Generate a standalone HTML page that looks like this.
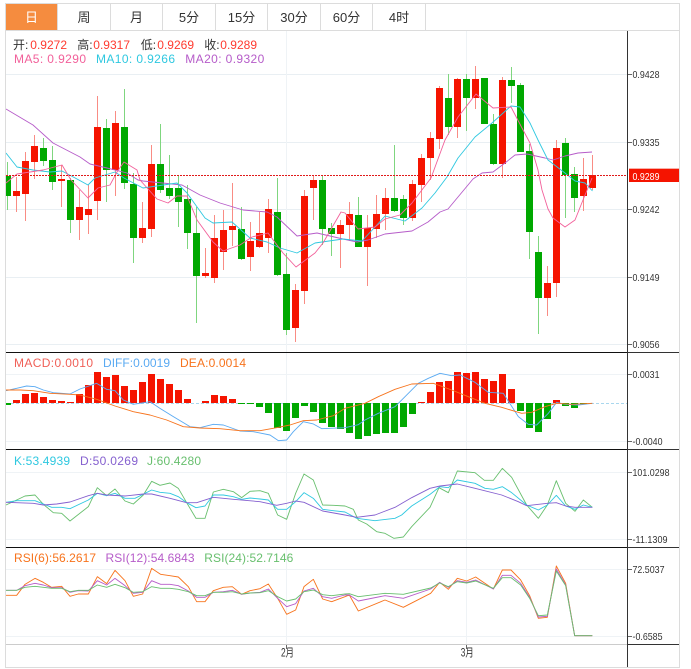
<!DOCTYPE html>
<html><head><meta charset="utf-8"><style>
html,body{margin:0;padding:0;background:#fff}
svg{display:block;font-family:"Liberation Sans","Noto Sans CJK SC",sans-serif}
.ax{font-size:10.5px;fill:#333}
.tab{font-size:13px;fill:#333;text-anchor:middle}
.lg{font-size:12px}
.ln{fill:none;stroke-width:.9;vector-effect:non-scaling-stroke;stroke-linejoin:round}
</style></head><body>
<svg width="691" height="669" viewBox="0 0 691 669" xmlns="http://www.w3.org/2000/svg">
<defs><clipPath id="c"><rect x="6" y="31" width="622" height="613"/></clipPath></defs>

<!-- grid -->
<g shape-rendering="crispEdges" stroke="#e9eff3" stroke-width="1" fill="none">
<path d="M6 74.5H628M6 142.5H628M6 209.5H628M6 277.5H628M6 344.5H628"/>
<path d="M6 374.5H628M6 441.5H628M6 472.5H628M6 539.5H628M6 569.5H628M6 636.5H628" stroke="#eff3f6"/>
<path d="M286.5 31V644M466.5 31V644" stroke="#eff3f6"/>
</g>

<g clip-path="url(#c)">
<!-- candle wicks -->
<g shape-rendering="crispEdges" fill="none" stroke-width="1">
<path stroke="#f98c84" d="M16.5 177V212M25.5 152V221M34.5 135V179M61.5 165V207M79.5 190V240M88.5 185V234M97.5 96V220M115.5 111V196M142.5 202V243M151.5 145V237M205.5 248V278M214.5 215V283M223.5 210V270M232.5 183V246M250.5 222V271M259.5 212V248M268.5 199V253M295.5 284V342M304.5 190V304M313.5 176V220M340.5 220V268M349.5 202V241M367.5 215V286M376.5 195V238M385.5 188V230M412.5 180V221M421.5 154V202M430.5 132V180M439.5 86V149M457.5 78V138M475.5 66V109M502.5 77V178M547.5 266V316M556.5 140V297M583.5 158V211M592.5 155V190"/>
<path stroke="#7fd67f" d="M7.5 162V210M43.5 138V166M52.5 146V190M70.5 178V233M106.5 119V202M124.5 89V189M133.5 173V263M160.5 124V193M169.5 155V199M178.5 176V227M187.5 185V249M196.5 207V323M241.5 207V260M277.5 178V276M286.5 253V335M322.5 176V245M331.5 223V256M358.5 197V247M394.5 145V212M403.5 195V225M448.5 74V135M466.5 74V131M493.5 114V165M511.5 67V103M520.5 83V152M529.5 144V259M538.5 236V334M565.5 138V218M574.5 167V212"/>
</g>
<!-- candle bodies -->
<path shape-rendering="crispEdges" fill="#f51400" d="M13 191h7v5h-7zM22 161h7v33h-7zM31 146h7v16h-7zM58 179h7v2h-7zM76 207h7v13h-7zM85 209h7v6h-7zM94 127h7v74h-7zM112 123h7v47h-7zM139 228h7v10h-7zM148 164h7v65h-7zM202 273h7v3h-7zM211 238h7v40h-7zM220 230h7v22h-7zM229 226h7v4h-7zM247 241h7v16h-7zM256 233h7v14h-7zM265 209h7v29h-7zM292 290h7v38h-7zM301 196h7v95h-7zM310 180h7v8h-7zM337 225h7v9h-7zM346 214h7v11h-7zM364 228h7v19h-7zM373 214h7v15h-7zM382 198h7v16h-7zM409 184h7v34h-7zM418 158h7v27h-7zM427 138h7v20h-7zM436 88h7v51h-7zM454 79h7v48h-7zM472 79h7v19h-7zM499 80h7v84h-7zM544 283h7v15h-7zM553 148h7v135h-7zM580 179h7v17h-7zM589 175h7v13h-7z"/>
<path shape-rendering="crispEdges" fill="#00a800" d="M4 176h7v20h-7zM40 148h7v13h-7zM49 160h7v22h-7zM67 180h7v40h-7zM103 128h7v42h-7zM121 127h7v56h-7zM130 184h7v54h-7zM157 164h7v26h-7zM166 188h7v8h-7zM175 188h7v14h-7zM184 199h7v34h-7zM193 233h7v43h-7zM238 229h7v30h-7zM274 212h7v63h-7zM283 274h7v56h-7zM319 180h7v49h-7zM328 228h7v6h-7zM355 215h7v32h-7zM391 198h7v13h-7zM400 199h7v19h-7zM445 98h7v29h-7zM463 79h7v19h-7zM481 78h7v46h-7zM490 124h7v40h-7zM508 80h7v6h-7zM517 85h7v67h-7zM526 151h7v81h-7zM535 252h7v46h-7zM562 143h7v32h-7zM571 174h7v24h-7z"/>

<!-- MA lines -->
<polyline class="ln" stroke="#b65cc9" points="6,109 33,125 53,143 80,157 90,164 107,168 127,173 138,180 143,181 182,185 200,195 220,203 243,210 267,212 277,217 297,236 317,233 343,239 357,242 368,240 385,234 412,231 428,222 440,212 448,209 458,197 473,179 482,173 493,172 505,163 515,155 527,154 545,158 553,160 565,156 578,153 592,152"/>
<polyline class="ln" stroke="#2fc8e0" points="6,153 17,167 33,170 50,172 62,171 77,179 88,185 95,178 115,172 124,178 143,188 177,183 187,193 205,218 213,223 232,222 250,238 267,242 280,248 297,253 315,243 343,239 362,241 375,227 385,216 405,221 422,208 435,193 447,177 458,158 475,137 492,123 511,106 520,107 530,123 538,140 548,160 565,173 575,181 585,183 592.5,191"/>
<polyline class="ln" stroke="#f2609a" points="6,183 17,174 43,170 62,165 71,180 88,198 98,188 110,185 117,172 124,162 137,170 140,180 157,199 168,203 177,196 187,196 197,220 213,242 223,251 240,245 252,237 268,233 283,253 296,267 315,253 323,243 341,212 345,213 358,229 375,227 385,219 400,215 412,203 431,178 445,140 458,117 476,94 493,108 511,107 522,128 530,143 538,170 542,190 548,209 553,218 565,227 575,220 583,200 592,178"/>
</g>

<!-- price line -->
<path d="M6 175.5H628" stroke="#e01a1a" stroke-width="1" stroke-dasharray="2 1" shape-rendering="crispEdges"/>

<!-- MACD -->
<path d="M6 403.5H628" stroke="#a9d7ee" stroke-width="1" stroke-dasharray="3 2" shape-rendering="crispEdges"/>
<path shape-rendering="crispEdges" fill="#f51400" d="M13 400h7v3h-7zM22 394h7v9h-7zM31 393h7v10h-7zM40 397h7v6h-7zM49 400h7v3h-7zM58 401h7v2h-7zM67 402h7v1h-7zM76 394h7v9h-7zM85 385h7v18h-7zM94 372h7v31h-7zM103 377h7v26h-7zM112 375h7v28h-7zM121 386h7v17h-7zM130 390h7v13h-7zM139 382h7v21h-7zM148 374h7v29h-7zM157 379h7v24h-7zM166 384h7v19h-7zM175 390h7v13h-7zM184 399h7v4h-7zM202 401h7v2h-7zM211 395h7v8h-7zM220 396h7v7h-7zM229 399h7v4h-7zM418 402h7v1h-7zM427 392h7v11h-7zM436 382h7v21h-7zM445 381h7v22h-7zM454 372h7v31h-7zM463 373h7v30h-7zM472 372h7v31h-7zM481 379h7v24h-7zM490 381h7v22h-7zM499 374h7v29h-7zM508 389h7v14h-7zM553 400h7v3h-7z"/>
<path shape-rendering="crispEdges" fill="#00a800" d="M6 403h5v2h-5zM238 403h7v1h-7zM247 403h7v1h-7zM256 403h7v4h-7zM265 403h7v10h-7zM274 403h7v25h-7zM283 403h7v28h-7zM292 403h7v15h-7zM301 403h7v3h-7zM310 403h7v9h-7zM319 403h7v20h-7zM328 403h7v24h-7zM337 403h7v26h-7zM346 403h7v30h-7zM355 403h7v36h-7zM364 403h7v33h-7zM373 403h7v31h-7zM382 403h7v30h-7zM391 403h7v30h-7zM400 403h7v24h-7zM409 403h7v11h-7zM517 403h7v8h-7zM526 403h7v25h-7zM535 403h7v29h-7zM544 403h7v16h-7zM562 403h7v3h-7zM571 403h7v5h-7zM580 403h7v1h-7z"/>
<g transform="translate(0,350) scale(.33333)">
<polyline class="ln" stroke="#5aaaf2" points="18,122 50,115 80,108 105,110 130,120 160,128 210,132 240,117 290,100 320,118 345,122 370,150 400,163 450,155 480,175 520,200 570,230 600,233 640,223 670,225 720,243 760,245 810,255 835,272 860,270 880,245 910,215 940,222 965,236 1035,233 1075,224 1095,210 1135,190 1185,170 1215,140 1255,100 1285,85 1320,70 1355,77 1380,75 1425,97 1465,127 1510,130 1555,200 1585,223 1610,225 1645,190 1670,157 1695,163 1735,165 1777,160"/>
<polyline class="ln" stroke="#f7731c" points="18,120 60,120 100,122 150,130 210,133 240,135 290,148 345,168 400,185 450,195 500,210 550,230 600,234 660,236 720,242 780,242 830,233 870,225 910,212 950,210 1000,197 1035,175 1095,160 1135,140 1185,118 1235,102 1300,100 1355,120 1405,140 1455,160 1505,172 1565,190 1595,187 1635,170 1670,160 1715,163 1777,160"/>
</g>

<!-- KDJ -->
<g transform="translate(0,450) scale(.33333)">
<polyline class="ln" stroke="#68bf6e" points="18,165 50,150 75,138 105,135 130,163 160,188 185,190 210,213 265,170 292,113 320,137 345,117 375,153 400,162 430,135 455,94 480,106 510,99 535,115 560,158 588,205 615,205 640,126 670,118 700,125 725,143 750,124 780,122 805,130 833,195 860,208 887,130 912,72 940,90 968,165 1000,166 1035,168 1060,178 1075,210 1100,222 1130,245 1155,250 1182,265 1210,261 1235,230 1290,172 1317,113 1345,128 1372,63 1425,68 1453,91 1480,91 1507,55 1535,82 1580,165 1615,205 1642,165 1669,92 1697,160 1725,184 1750,150 1777,172"/>
<polyline class="ln" stroke="#2fc8e0" points="18,157 50,152 105,152 155,172 185,172 210,176 265,150 292,130 320,137 345,130 375,145 405,145 455,120 480,127 510,130 535,140 560,158 588,173 615,168 640,135 670,135 700,140 725,148 750,144 780,147 805,150 833,178 860,178 887,155 912,128 940,145 968,178 1000,182 1035,186 1070,205 1125,212 1185,205 1205,195 1235,168 1290,133 1320,110 1345,113 1372,90 1425,100 1455,115 1480,118 1507,110 1535,128 1580,165 1615,180 1642,165 1669,136 1697,168 1725,178 1750,165 1777,172"/>
<polyline class="ln" stroke="#8560cf" points="18,157 100,160 130,165 170,162 210,156 265,137 292,130 320,135 375,138 430,132 455,132 510,145 560,158 590,158 640,142 700,148 780,155 830,166 860,160 887,153 912,157 968,183 1035,195 1070,202 1125,195 1185,172 1235,143 1290,115 1320,108 1372,102 1425,115 1505,135 1555,155 1580,167 1642,160 1669,158 1697,168 1725,172 1777,172"/>
</g>

<!-- RSI -->
<g transform="translate(0,545) scale(.33333)">
<polyline class="ln" stroke="#f7731c" points="18,151 50,151 75,118 105,100 130,112 155,127 185,124 210,154 235,147 265,147 292,95 320,116 345,76 375,107 400,154 428,147 455,70 482,88 510,92 535,96 565,125 590,170 615,170 640,137 670,127 697,125 725,148 750,137 780,131 805,117 833,160 860,208 887,195 912,125 940,103 968,162 995,170 1035,155 1048,150 1075,198 1155,165 1210,187 1292,145 1319,112 1345,133 1372,100 1400,108 1427,96 1480,132 1507,75 1533,75 1562,105 1589,152 1615,220 1642,217 1669,63 1697,115 1724,272 1777,272"/>
<polyline class="ln" stroke="#b65cc9" points="18,136 50,136 75,122 105,115 130,120 155,128 185,128 210,142 235,137 265,138 292,107 320,120 345,100 375,122 400,145 428,142 455,107 482,118 510,118 535,122 565,138 590,157 615,157 640,142 670,140 697,136 725,148 750,144 780,142 805,132 833,160 860,185 887,176 912,138 940,130 968,155 995,160 1035,150 1048,150 1075,168 1155,152 1210,160 1292,132 1319,112 1345,127 1372,107 1400,112 1427,105 1480,132 1507,91 1533,91 1562,115 1589,157 1615,216 1642,214 1669,72 1697,120 1724,272 1777,272"/>
<polyline class="ln" stroke="#68bf6e" points="18,136 50,136 75,127 105,124 130,127 155,130 185,130 210,140 235,136 265,136 292,120 320,127 345,118 375,128 400,142 428,140 455,125 482,130 510,130 535,133 565,140 590,152 615,152 640,142 670,142 697,140 725,147 750,144 780,143 805,137 833,155 860,168 887,162 912,140 940,135 968,149 995,152 1035,147 1048,146 1075,155 1155,145 1210,148 1292,129 1319,114 1345,125 1372,110 1400,114 1427,108 1480,130 1507,98 1533,98 1562,120 1589,160 1615,212 1642,210 1669,78 1697,122 1724,272 1777,272"/>
</g>

<!-- frame -->
<g shape-rendering="crispEdges" fill="none" stroke-width="1">
<path stroke="#dcdcdc" d="M5.5 3.5H679.5V667.5H5.5ZM5.5 30.5H679.5M57.5 4V30M110.5 4V30M162.5 4V30M215.5 4V30M267.5 4V30M320.5 4V30M372.5 4V30M425.5 4V30"/>
<path stroke="#111" d="M6 352.5H628M6 449.5H628M6 547.5H628"/>
<path stroke="#333" d="M628 352.5H679M628 449.5H679M628 547.5H679M628 644.5H679M627.5 31V667"/>
<path stroke="#ccc" d="M6 644.5H627"/>
<path stroke="#666" d="M628 74.5h4M628 142.5h4M628 209.5h4M628 277.5h4M628 344.5h4M628 374.5h4M628 441.5h4M628 472.5h4M628 539.5h4M628 569.5h4M628 636.5h4M286.5 645v4M466.5 645v4"/>
</g>
<rect x="6" y="4" width="51" height="26" fill="#f58c3f"/>
<rect x="629" y="168" width="50" height="1" fill="#f8b0a8"/>
<rect x="629" y="169" width="50" height="13" fill="#f51400"/>

<!-- tabs -->
<text class="tab" x="31.5" y="22" style="fill:#fff">日</text>
<text class="tab" x="84" y="22">周</text>
<text class="tab" x="136.5" y="22">月</text>
<text class="tab" x="189" y="22">5分</text>
<text class="tab" x="241.5" y="22">15分</text>
<text class="tab" x="294" y="22">30分</text>
<text class="tab" x="346.5" y="22">60分</text>
<text class="tab" x="399" y="22">4时</text>

<!-- legends -->
<g class="lg">
<text x="13" y="49" fill="#333">开:</text><text x="30.3" y="49" fill="#ff3a2f">0.9272</text>
<text x="77.3" y="49" fill="#333">高:</text><text x="93.3" y="49" fill="#ff3a2f">0.9317</text>
<text x="140.7" y="49" fill="#333">低:</text><text x="157.3" y="49" fill="#ff3a2f">0.9269</text>
<text x="204.3" y="49" fill="#333">收:</text><text x="220.3" y="49" fill="#ff3a2f">0.9289</text>
<text x="14" y="63" fill="#f2609a" textLength="72">MA5: 0.9290</text>
<text x="96" y="63" fill="#2fc8e0" textLength="79">MA10: 0.9266</text>
<text x="185.3" y="63" fill="#b65cc9" textLength="79">MA20: 0.9320</text>
<text x="14" y="367" fill="#f06058" textLength="79">MACD:0.0010</text>
<text x="103" y="367" fill="#5aaaf2" textLength="67">DIFF:0.0019</text>
<text x="180" y="367" fill="#f7731c" textLength="66">DEA:0.0014</text>
<text x="14" y="465" fill="#2fc8e0" textLength="56">K:53.4939</text>
<text x="80" y="465" fill="#8560cf" textLength="58">D:50.0269</text>
<text x="147" y="465" fill="#68bf6e" textLength="54">J:60.4280</text>
<text x="14" y="562" fill="#f7731c" textLength="82">RSI(6):56.2617</text>
<text x="105.5" y="562" fill="#b65cc9" textLength="89">RSI(12):54.6843</text>
<text x="204.3" y="562" fill="#68bf6e" textLength="89">RSI(24):52.7146</text>
</g>

<!-- axis labels -->
<g class="ax">
<text x="632.5" y="78" textLength="27" lengthAdjust="spacingAndGlyphs">0.9428</text>
<text x="632.5" y="146" textLength="27" lengthAdjust="spacingAndGlyphs">0.9335</text>
<text x="632.5" y="180" textLength="27" lengthAdjust="spacingAndGlyphs" style="fill:#fff">0.9289</text>
<text x="632.5" y="213" textLength="27" lengthAdjust="spacingAndGlyphs">0.9242</text>
<text x="632.5" y="281" textLength="27" lengthAdjust="spacingAndGlyphs">0.9149</text>
<text x="632.5" y="348" textLength="27" lengthAdjust="spacingAndGlyphs">0.9056</text>
<text x="632.5" y="378" textLength="27" lengthAdjust="spacingAndGlyphs">0.0031</text>
<text x="632.5" y="445" textLength="30" lengthAdjust="spacingAndGlyphs">-0.0040</text>
<text x="632.5" y="476" textLength="37" lengthAdjust="spacingAndGlyphs">101.0298</text>
<text x="632.5" y="543" textLength="35" lengthAdjust="spacingAndGlyphs">-11.1309</text>
<text x="632.5" y="573" textLength="32" lengthAdjust="spacingAndGlyphs">72.5037</text>
<text x="632.5" y="640" textLength="30" lengthAdjust="spacingAndGlyphs">-0.6585</text>
<text x="281" y="656.5" textLength="13" lengthAdjust="spacingAndGlyphs" style="font-size:11.5px">2月</text>
<text x="460.7" y="656.5" textLength="13" lengthAdjust="spacingAndGlyphs" style="font-size:11.5px">3月</text>
</g>
</svg>
</body></html>
